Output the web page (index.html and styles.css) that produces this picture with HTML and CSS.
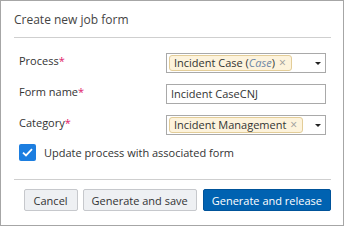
FILE: index.html
```html
<!DOCTYPE html>
<html>
<head>
  <title>Create new job form</title>
  <link rel="stylesheet" href="styles.css">
</head>
<body>

  <div class="dialog">
    <div class="dialog-header">Create new job form</div>

    <div class="dialog-body">
      <div class="field-row">
        <label class="field-label">Process<span class="req">*</span></label>
        <div class="select-box">
          <span class="tag">Incident Case (<i class="tag-type">Case</i>) <span class="tag-x">&times;</span></span>
          <span class="caret"></span>
        </div>
      </div>
      <div class="field-row">
        <label class="field-label">Form name<span class="req">*</span></label>
        <div class="text-box">Incident CaseCNJ</div>
      </div>
      <div class="field-row">
        <label class="field-label">Category<span class="req">*</span></label>
        <div class="select-box">
          <span class="tag">Incident Management <span class="tag-x">&times;</span></span>
          <span class="caret"></span>
        </div>
      </div>
      <div class="check-row">
        <span class="checkbox">
          <svg width="11" height="9" viewBox="0 0 11 9"><path d="M1 4.6 L4 7.4 L10 1.2" fill="none" stroke="#fff" stroke-width="1.8"/></svg>
        </span>
        <span class="check-label">Update process with associated form</span>
      </div>
    </div>

    <div class="dialog-footer">
      <button class="btn btn-cancel">Cancel</button>
      <button class="btn">Generate and save</button>
      <button class="btn btn-primary">Generate and release</button>
    </div>
  </div>

</body>
</html>
```

FILE: styles.css
```css
body {
  margin: 0;
  padding: 0;
  font-family: "Open Sans", "Liberation Sans", sans-serif;
  font-size: 11px;
  color: #333;
  background: #fff;
}
.dialog {
  width: 344px;
  height: 226px;
  box-sizing: border-box;
  border: 1px solid #a6a6a6;
  padding: 0 12px 0 13px;
}
.dialog-header {
  height: 37px;
  box-sizing: border-box;
  padding-top: 10px;
  font-size: 12px;
  line-height: 18px;
  color: #444;
  border-bottom: 1px solid #cfcfcf;
}
.dialog-body {
  padding: 15px 5px 0 5px;
  height: 141px;
  box-sizing: border-box;
}
.field-row {
  display: flex;
  align-items: flex-start;
  margin-bottom: 11px;
}
.field-label {
  width: 147px;
  line-height: 16px;
  color: #333;
}
.req {
  color: #e0206a;
}
.select-box, .text-box {
  width: 160px;
  height: 20px;
  box-sizing: border-box;
  border: 1px solid #a9a9a9;
  background: #fff;
  display: flex;
  align-items: center;
}
.select-box {
  padding-left: 2px;
  position: relative;
}
.text-box {
  padding-left: 4px;
  line-height: 18px;
}
.tag {
  height: 16px;
  box-sizing: border-box;
  line-height: 14px;
  padding: 0 5px 0 4px;
  background: #fdf3dc;
  border: 1px solid #e3cd98;
  border-radius: 3px;
  white-space: nowrap;
}
.tag-type {
  color: #6d87a6;
}
.tag-x {
  margin-left: 1px;
  color: #9a9a9a;
  font-size: 12px;
}
.caret {
  position: absolute;
  right: 4px;
  top: 8px;
  width: 0;
  height: 0;
  border-left: 3px solid transparent;
  border-right: 3px solid transparent;
  border-top: 3px solid #222;
}
.check-row {
  display: flex;
  align-items: center;
  margin-top: -2px;
}
.checkbox {
  width: 17px;
  height: 17px;
  border-radius: 2px;
  background: #1c7ee0;
  display: flex;
  align-items: center;
  justify-content: center;
  margin-right: 8px;
}
.check-label {
  line-height: 17px;
}
.dialog-footer {
  border-top: 1px solid #cfcfcf;
  padding-top: 9px;
  display: flex;
  justify-content: flex-end;
  gap: 5px;
}
.btn {
  flex-shrink: 0;
  white-space: nowrap;
  height: 22px;
  padding: 0 8px;
  font-family: "Open Sans", "Liberation Sans", sans-serif;
  font-size: 11px;
  color: #333;
  background: #eef0f3;
  border: 1px solid #c6c8cc;
  border-radius: 2px;
}
.btn-cancel {
  width: 54px;
}
.btn-primary {
  margin-left: 1px;
  color: #fff;
  background: #0062b1;
  border-color: #00539a;
}
```
